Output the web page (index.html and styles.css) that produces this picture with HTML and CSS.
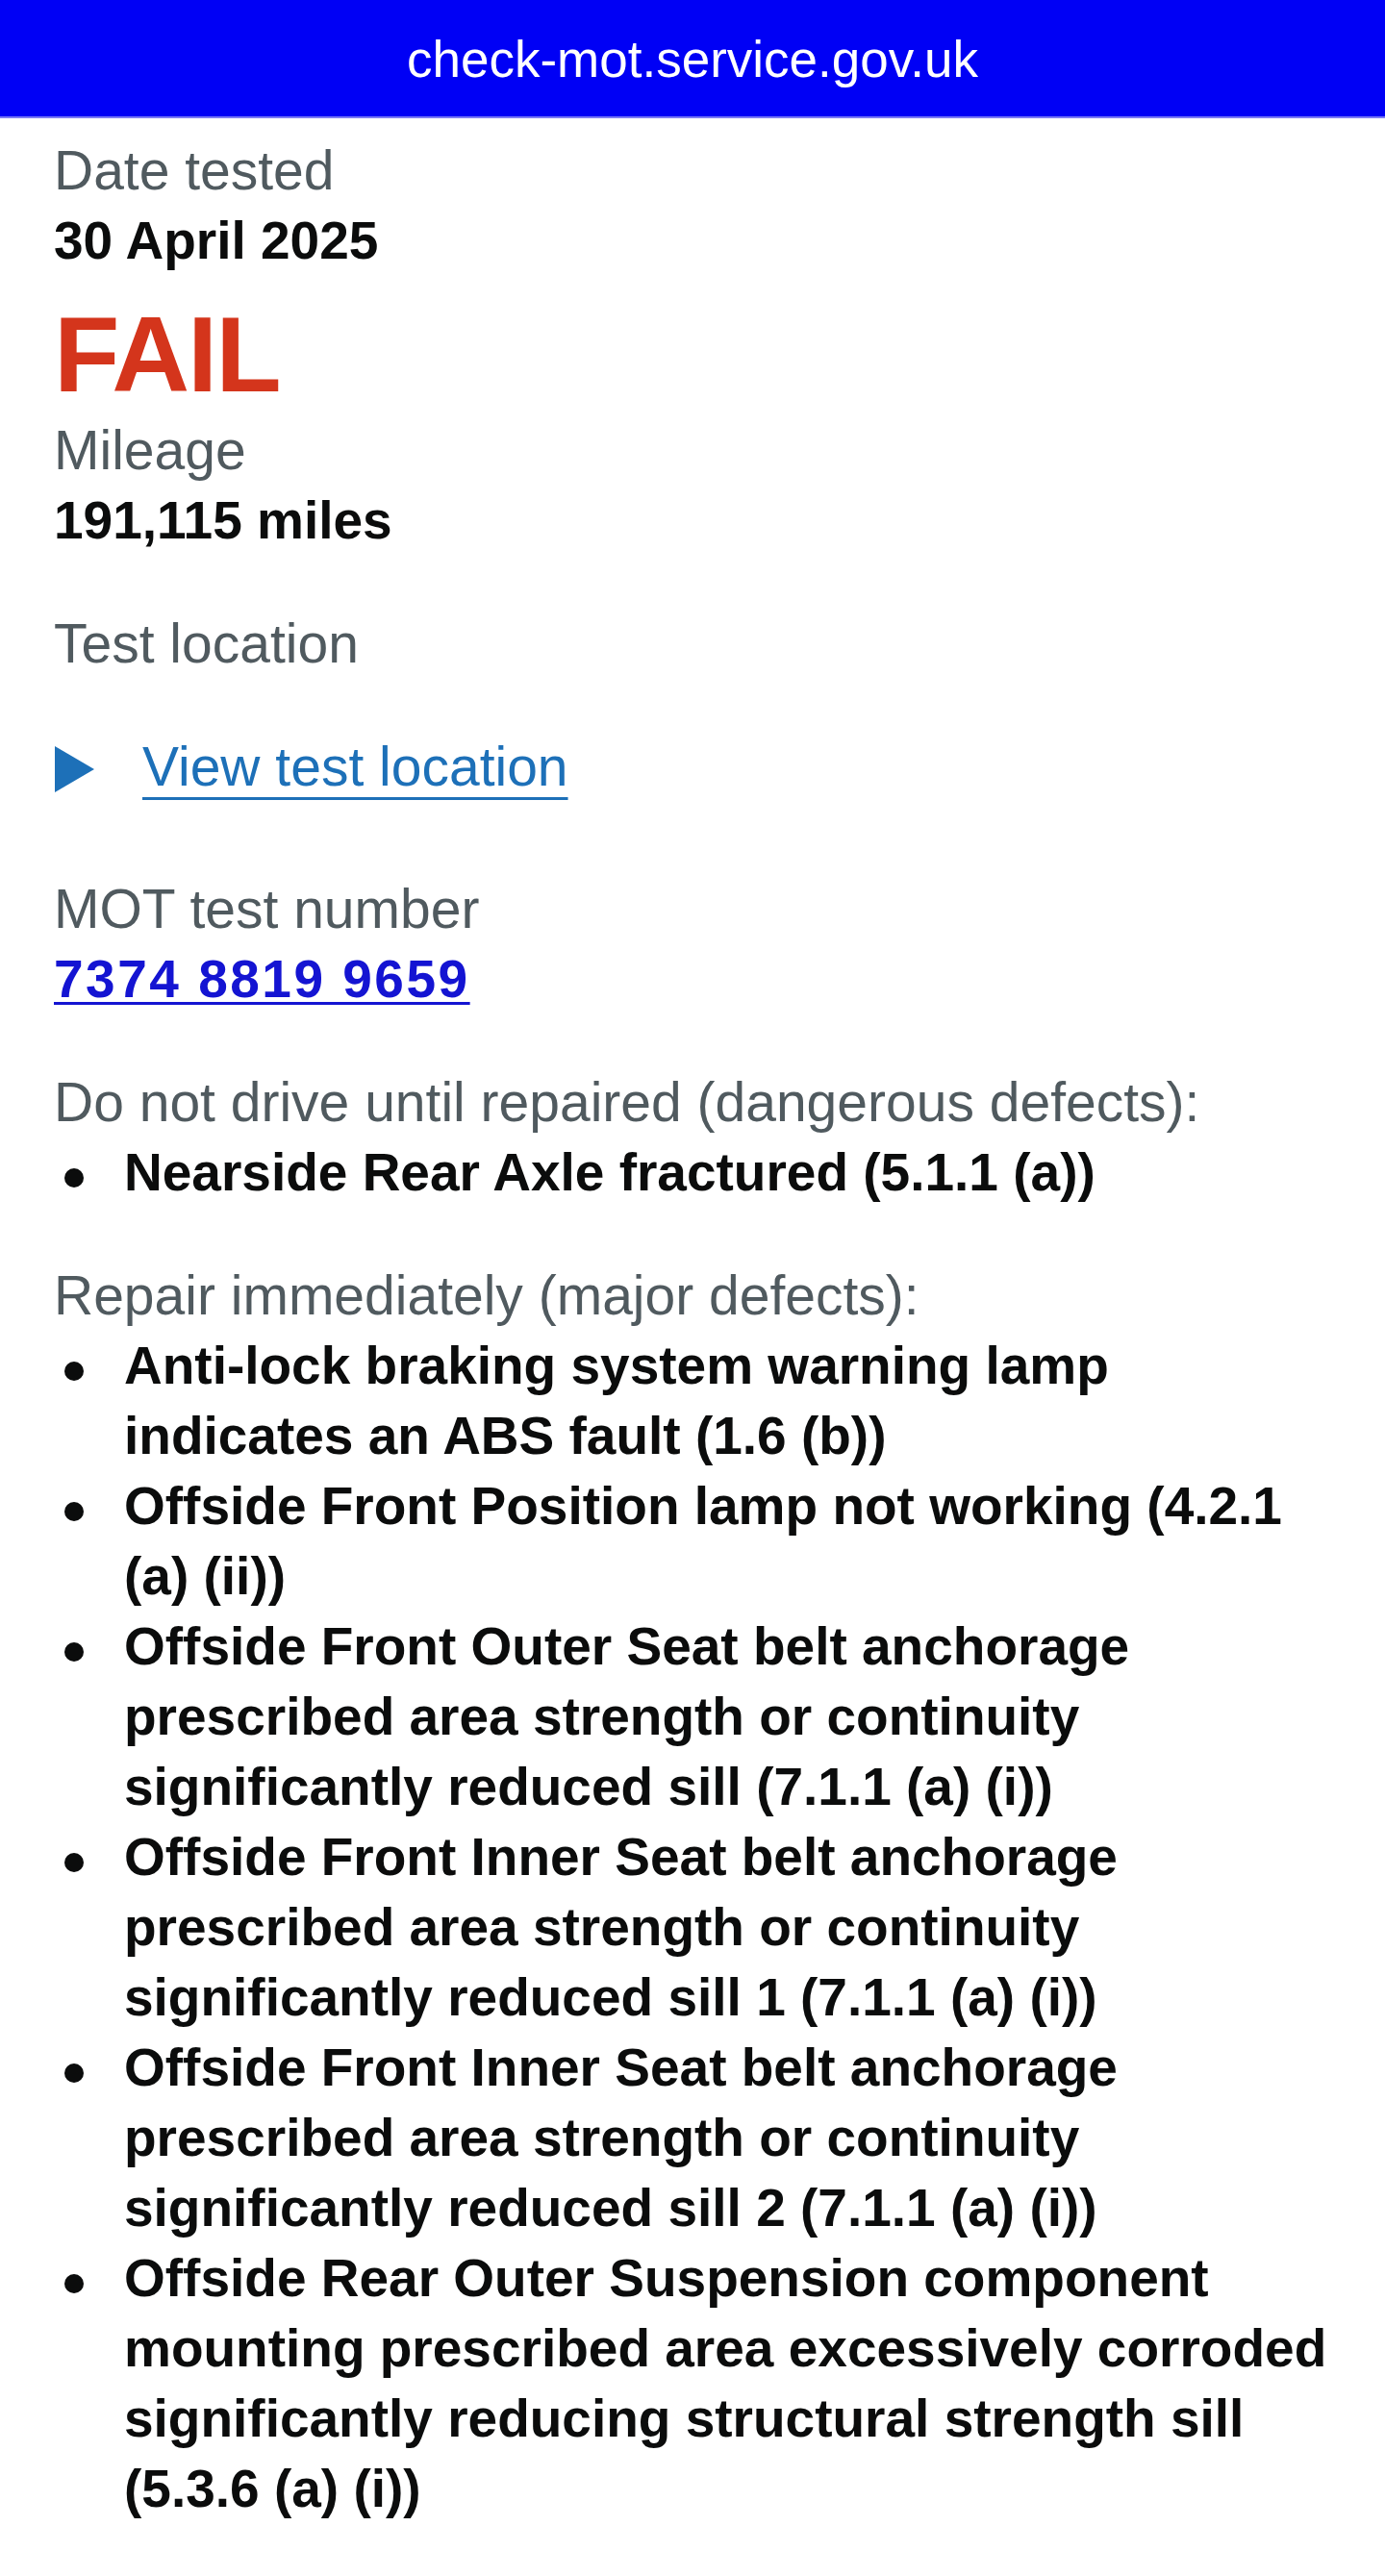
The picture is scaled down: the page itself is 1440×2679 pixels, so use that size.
FILE: index.html
```html
<!DOCTYPE html>
<html lang="en">
<head>
<meta charset="utf-8">
<title>MOT test result</title>
<link rel="stylesheet" href="styles.css">
</head>
<body>
<header class="urlbar">
  <span class="url">check-mot.service.gov.uk</span>
</header>
<main class="page">
  <section class="field">
    <p class="label">Date tested</p>
    <p class="value">30 April 2025</p>
  </section>
  <p class="status">FAIL</p>
  <section class="field group">
    <p class="label">Mileage</p>
    <p class="value">191,115 miles</p>
  </section>
  <section class="field group">
    <p class="label">Test location</p>
  </section>
  <details class="details">
    <summary class="summary"><span class="arrow"></span><span class="summary-text">View test location</span></summary>
  </details>
  <section class="field group">
    <p class="label">MOT test number</p>
    <p class="value"><a class="mot-link" href="#">7374 8819 9659</a></p>
  </section>
  <section class="field group">
    <p class="label">Do not drive until repaired (dangerous defects):</p>
    <ul class="defects">
      <li>Nearside Rear Axle fractured (5.1.1 (a))</li>
    </ul>
  </section>
  <section class="field">
    <p class="label">Repair immediately (major defects):</p>
    <ul class="defects">
      <li>Anti-lock braking system warning lamp indicates an ABS fault (1.6 (b))</li>
      <li>Offside Front Position lamp not working (4.2.1 (a) (ii))</li>
      <li>Offside Front Outer Seat belt anchorage prescribed area strength or continuity significantly reduced sill (7.1.1 (a) (i))</li>
      <li>Offside Front Inner Seat belt anchorage prescribed area strength or continuity significantly reduced sill 1 (7.1.1 (a) (i))</li>
      <li>Offside Front Inner Seat belt anchorage prescribed area strength or continuity significantly reduced sill 2 (7.1.1 (a) (i))</li>
      <li>Offside Rear Outer Suspension component mounting prescribed area excessively corroded significantly reducing structural strength sill (5.3.6 (a) (i))</li>
    </ul>
  </section>
</main>
</body>
</html>
```
FILE: styles.css
```css
html, body {
  margin: 0;
  background: #ffffff;
}

body {
  font-family: "Liberation Sans", Arial, sans-serif;
  color: #0b0c0c;
}

.urlbar {
  background: #0000f5;
  color: #ffffff;
  text-align: center;
  font-size: 53px;
  line-height: 73px;
  padding: 25px 0 23px;
  border-bottom: 2px solid #7a7af6;
}

.page {
  padding: 18px 47px 0 56px;
}

.field {
  margin: 0;
}

.label {
  margin: 0;
  font-size: 57px;
  line-height: 73px;
  color: #505a5f;
}

.value {
  margin: 0;
  font-size: 55px;
  line-height: 73px;
  font-weight: 700;
}

.status {
  margin: 19px 0 0;
  font-size: 112px;
  line-height: 126px;
  font-weight: 700;
  color: #d4351c;
  letter-spacing: -2px;
}

.group {
  margin-bottom: 55px;
}

.details {
  margin: 0 0 75px;
}

.summary {
  display: flex;
  align-items: flex-start;
  list-style: none;
  font-size: 57px;
  line-height: 73px;
  color: #1d70b8;
  cursor: pointer;
}

.summary::-webkit-details-marker {
  display: none;
}

.arrow {
  flex: none;
  width: 41px;
  height: 48px;
  margin: 15px 50px 0 1px;
  background: #1d70b8;
  clip-path: polygon(0 0, 100% 50%, 0 100%);
}

.summary-text {
  text-decoration: underline;
  text-decoration-thickness: 3px;
  text-underline-offset: 12px;
}

.mot-link {
  color: #1414d2;
  letter-spacing: 2.5px;
  text-decoration: underline;
  text-decoration-thickness: 3px;
  text-underline-offset: 5px;
}

.defects {
  list-style: none;
  margin: 0;
  padding: 0;
}

.defects li {
  display: flex;
  font-size: 55px;
  line-height: 73px;
  font-weight: 700;
}

.defects li::before {
  content: "";
  flex: none;
  width: 20px;
  height: 20px;
  border-radius: 50%;
  background: #0b0c0c;
  margin: 32px 42px 0 11px;
}
```
